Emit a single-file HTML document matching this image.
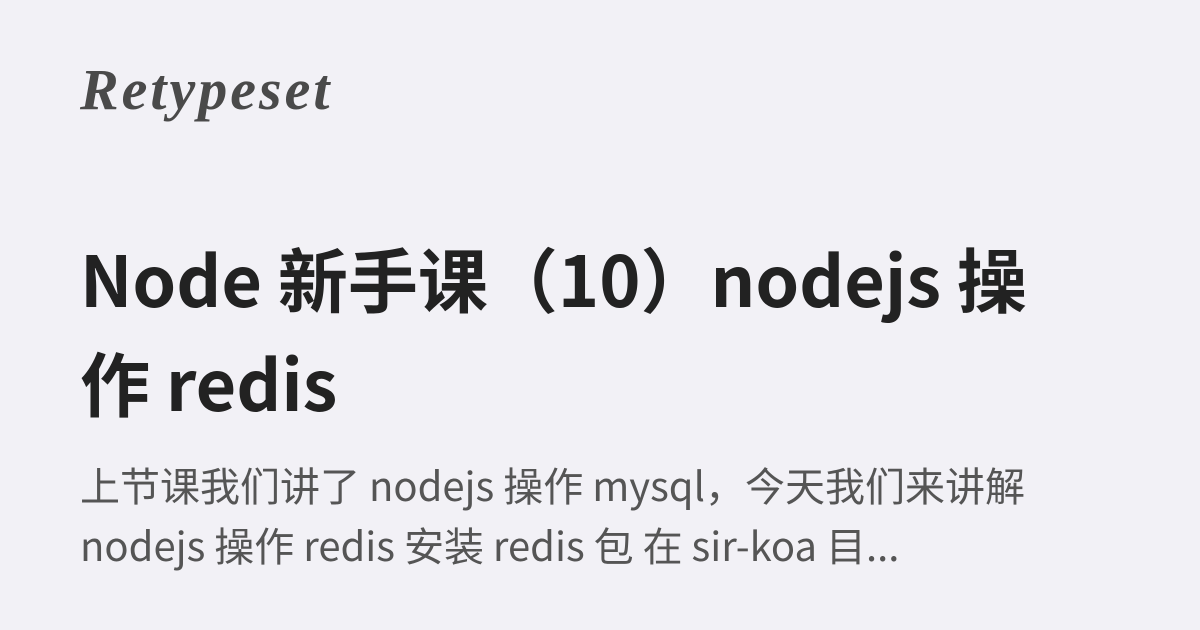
<!DOCTYPE html>
<html><head><meta charset="utf-8"><style>
html,body{margin:0;padding:0}
body{width:1200px;height:630px;background:#f2f1f6;overflow:hidden;position:relative;font-family:"Liberation Sans","Noto Sans CJK SC",sans-serif}
.logo{position:absolute;left:80px;top:56px;font-family:"Liberation Serif",serif;font-style:italic;font-weight:bold;font-size:58px;color:#4a4a4a;letter-spacing:3px}
h1{position:absolute;left:80px;top:226px;width:960px;margin:0;font-size:70px;line-height:104px;font-weight:bold;color:#222;font-family:"Noto Sans CJK SC",sans-serif}
p{position:absolute;left:80px;top:454px;width:1000px;margin:0;font-size:40px;line-height:60px;color:#555;font-family:"Noto Sans CJK SC",sans-serif}
</style></head><body>
<div class="logo">Retypeset</div>
<h1>Node 新手课（10）nodejs 操作 redis</h1>
<p>上节课我们讲了 nodejs 操作 mysql，今天我们来讲解 nodejs 操作 redis 安装 redis 包 在 sir-koa 目...</p>
</body></html>
